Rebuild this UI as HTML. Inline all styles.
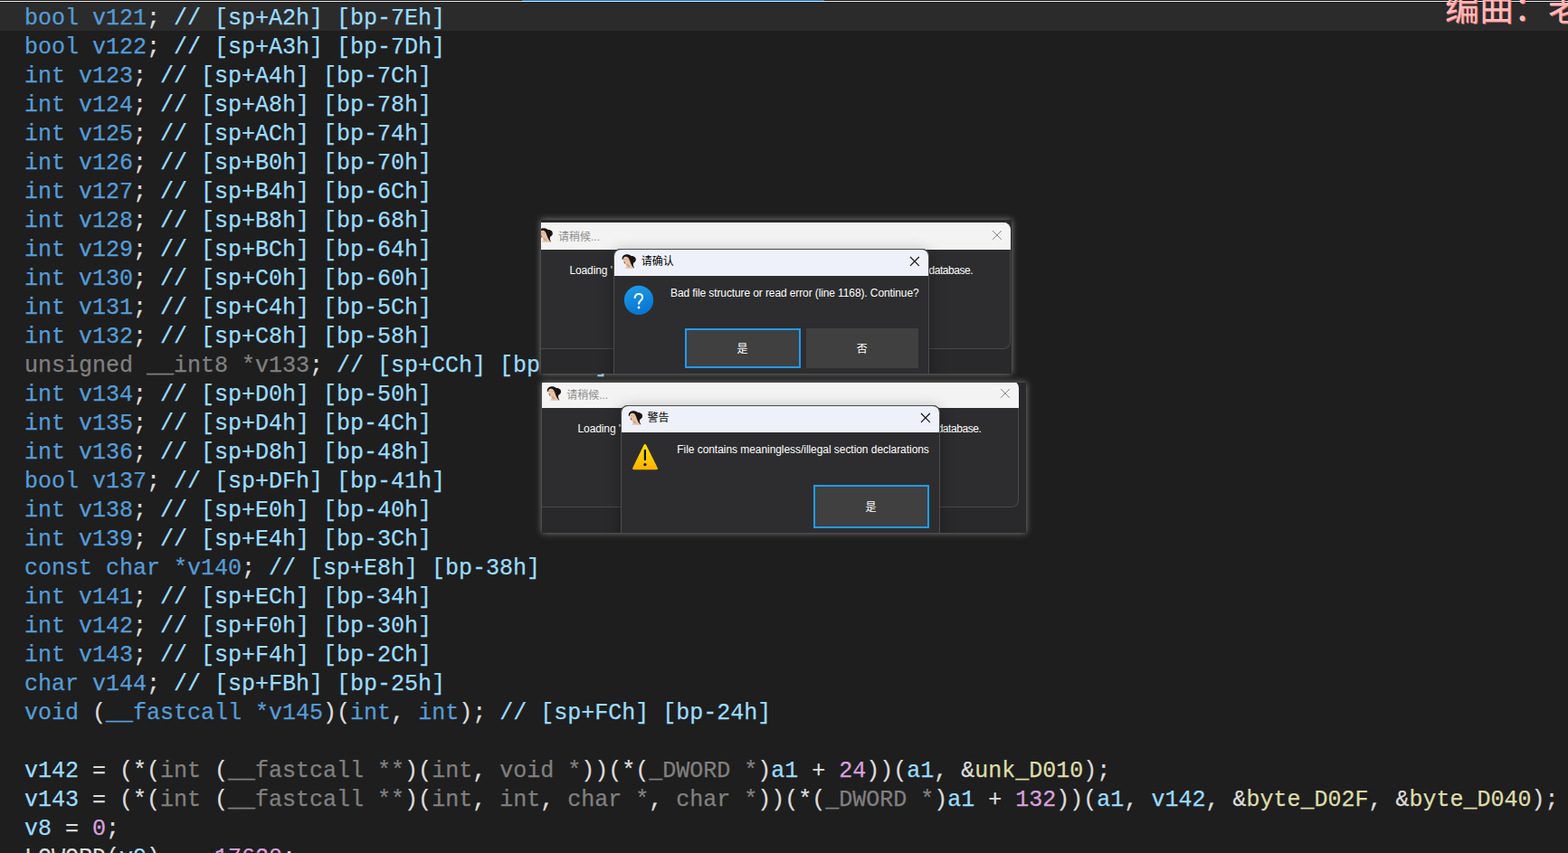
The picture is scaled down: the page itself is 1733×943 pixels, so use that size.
<!DOCTYPE html>
<html><head><meta charset="utf-8">
<style>
html,body{margin:0;padding:0}
html{width:1733px;height:943px;overflow:hidden;background:#1e1e1e}
body{width:1733px;height:943px;overflow:hidden;position:relative;background:#1e1e1e;font-family:"Liberation Sans",sans-serif}
.topline{position:absolute;left:0;top:0;width:1733px;height:1px;background:#161618;border-bottom:1px solid #ececec}
.topblue{position:absolute;left:577px;top:0;width:334px;height:1px;background:#0072c9}
.hl{position:absolute;left:0;top:3px;width:1733px;height:31px;background:#2b2b2b}
.code{position:absolute;left:27px;top:5px;font-family:"Liberation Mono",monospace;font-size:25px;line-height:32px;white-space:pre;color:#dcdcdc;-webkit-text-stroke:0.25px;height:938px;width:1706px;overflow:hidden}
.l{height:32px}
.k{color:#569cd6}.c{color:#9cdcfe}.p{color:#dcdcdc}.g{color:#808080}.n{color:#d8a0df}.y{color:#dcdcaa}.v{color:#9cdcfe}
.ov{position:absolute;overflow:hidden;background:#29292b;box-shadow:0 0 7px #868686}
.ovs{position:absolute;left:0;top:0}
.win{position:absolute;box-sizing:border-box;background:#2d2d2f;box-shadow:inset 0 0 0 1px #48484a;border-radius:8px;overflow:hidden}
.dlg{position:absolute;box-sizing:border-box;background:#2d2d2f;box-shadow:inset 0 0 0 1px #4c4c4e,0 3px 16px rgba(0,0,0,.3);border-radius:8px 8px 0 0;overflow:hidden}
.tb{height:30px}
.tbg{background:#f3f3f3;border-top:1px solid #fff;box-sizing:border-box}
.tbl{background:#eff1fa;margin:1px 1px 0 1px;height:29px;border-radius:7px 7px 0 0}
.t{position:absolute;font-family:"Liberation Sans",sans-serif;font-size:12px;line-height:14px;color:#fff;white-space:pre}
.btn{position:absolute;box-sizing:border-box;background:#404040}
.foc{border:2px solid #1e9cf3}
.lyr{position:absolute;left:0;top:0}
.cj{font-family:"Liberation Sans","Noto Sans CJK SC",sans-serif;font-size:12px}
</style></head><body>
<div class="hl"></div>
<div class="topline"></div><div class="topblue"></div>
<div class="code"><div class="l"><span class="k">bool v121</span><span class="p">;</span><span class="c"> // [sp+A2h] [bp-7Eh]</span></div><div class="l"><span class="k">bool v122</span><span class="p">;</span><span class="c"> // [sp+A3h] [bp-7Dh]</span></div><div class="l"><span class="k">int v123</span><span class="p">;</span><span class="c"> // [sp+A4h] [bp-7Ch]</span></div><div class="l"><span class="k">int v124</span><span class="p">;</span><span class="c"> // [sp+A8h] [bp-78h]</span></div><div class="l"><span class="k">int v125</span><span class="p">;</span><span class="c"> // [sp+ACh] [bp-74h]</span></div><div class="l"><span class="k">int v126</span><span class="p">;</span><span class="c"> // [sp+B0h] [bp-70h]</span></div><div class="l"><span class="k">int v127</span><span class="p">;</span><span class="c"> // [sp+B4h] [bp-6Ch]</span></div><div class="l"><span class="k">int v128</span><span class="p">;</span><span class="c"> // [sp+B8h] [bp-68h]</span></div><div class="l"><span class="k">int v129</span><span class="p">;</span><span class="c"> // [sp+BCh] [bp-64h]</span></div><div class="l"><span class="k">int v130</span><span class="p">;</span><span class="c"> // [sp+C0h] [bp-60h]</span></div><div class="l"><span class="k">int v131</span><span class="p">;</span><span class="c"> // [sp+C4h] [bp-5Ch]</span></div><div class="l"><span class="k">int v132</span><span class="p">;</span><span class="c"> // [sp+C8h] [bp-58h]</span></div><div class="l"><span class="g">unsigned __int8 *v133</span><span class="p">;</span><span class="c"> // [sp+CCh] [bp-54h]</span></div><div class="l"><span class="k">int v134</span><span class="p">;</span><span class="c"> // [sp+D0h] [bp-50h]</span></div><div class="l"><span class="k">int v135</span><span class="p">;</span><span class="c"> // [sp+D4h] [bp-4Ch]</span></div><div class="l"><span class="k">int v136</span><span class="p">;</span><span class="c"> // [sp+D8h] [bp-48h]</span></div><div class="l"><span class="k">bool v137</span><span class="p">;</span><span class="c"> // [sp+DFh] [bp-41h]</span></div><div class="l"><span class="k">int v138</span><span class="p">;</span><span class="c"> // [sp+E0h] [bp-40h]</span></div><div class="l"><span class="k">int v139</span><span class="p">;</span><span class="c"> // [sp+E4h] [bp-3Ch]</span></div><div class="l"><span class="k">const char *v140</span><span class="p">;</span><span class="c"> // [sp+E8h] [bp-38h]</span></div><div class="l"><span class="k">int v141</span><span class="p">;</span><span class="c"> // [sp+ECh] [bp-34h]</span></div><div class="l"><span class="k">int v142</span><span class="p">;</span><span class="c"> // [sp+F0h] [bp-30h]</span></div><div class="l"><span class="k">int v143</span><span class="p">;</span><span class="c"> // [sp+F4h] [bp-2Ch]</span></div><div class="l"><span class="k">char v144</span><span class="p">;</span><span class="c"> // [sp+FBh] [bp-25h]</span></div><div class="l"><span class="k">void </span><span class="p">(</span><span class="k">__fastcall *v145</span><span class="p">)(</span><span class="k">int</span><span class="p">, </span><span class="k">int</span><span class="p">);</span><span class="c"> // [sp+FCh] [bp-24h]</span></div><div class="l"></div><div class="l"><span class="v">v142</span><span class="p"> = (*(</span><span class="g">int </span><span class="p">(</span><span class="g">__fastcall **</span><span class="p">)(</span><span class="g">int</span><span class="p">, </span><span class="g">void *</span><span class="p">))(*(</span><span class="g">_DWORD *</span><span class="p">)</span><span class="v">a1</span><span class="p"> + </span><span class="n">24</span><span class="p">))(</span><span class="v">a1</span><span class="p">, &amp;</span><span class="y">unk_D010</span><span class="p">);</span></div><div class="l"><span class="v">v143</span><span class="p"> = (*(</span><span class="g">int </span><span class="p">(</span><span class="g">__fastcall **</span><span class="p">)(</span><span class="g">int</span><span class="p">, </span><span class="g">int</span><span class="p">, </span><span class="g">char *</span><span class="p">, </span><span class="g">char *</span><span class="p">))(*(</span><span class="g">_DWORD *</span><span class="p">)</span><span class="v">a1</span><span class="p"> + </span><span class="n">132</span><span class="p">))(</span><span class="v">a1</span><span class="p">, </span><span class="v">v142</span><span class="p">, &amp;</span><span class="y">byte_D02F</span><span class="p">, &amp;</span><span class="y">byte_D040</span><span class="p">);</span></div><div class="l"><span class="v">v8</span><span class="p"> = </span><span class="n">0</span><span class="p">;</span></div><div class="l"><span class="p">LOWORD(</span><span class="v">v9</span><span class="p">) = </span><span class="n">-17620</span><span class="p">;</span></div></div>
<div class="ov" style="left:598px;top:243px;width:520px;height:170px"><div class="win" style="left:-38px;top:3px;width:557px;height:140px"><div class="tb tbg"></div></div><div class="t" style="left:31.4px;top:49.4px;letter-spacing:-0.1px">Loading '</div><div class="t" style="left:277.2px;top:49.4px;width:200px;text-align:right;letter-spacing:-0.45px">from the database.</div><div class="dlg" style="left:80px;top:32px;width:349px;height:200px"><div class="tb tbl"></div></div><div class="t" style="left:143.0px;top:73.8px;letter-spacing:-0.11px">Bad file structure or read error (line 1168). Continue?</div><div class="btn foc" style="left:159px;top:120px;width:128px;height:44px"></div><div class="btn" style="left:293px;top:120px;width:124px;height:44px"></div><svg class="ovs" width="520" height="170" viewBox="0 0 520 170"><g transform="translate(-3.00,9.00)">
<path fill="#e4c4a8" d="M2,3C3,1.8 5.5,1.6 7,2.6C8.4,3.6 9.2,5.6 9.6,7.6C10,9.4 11,11 12.2,12.8C13,14 13.8,15 14.2,15.8L3.4,15.8C4,15.2 5,14.6 5.2,13.4C5.3,12.4 4.9,11.8 4.4,11.2C3.4,10.6 2.6,9.6 2.3,8.2C2,6.6 1.7,4.6 2,3Z"/>
<path fill="#c79f82" d="M2.6,5.2h1.7v1H2.6zM5.4,5.4h1.7v1H5.4zM6,10.5C7,11.5 8,12.5 9.4,13.2L8,14.4C6.8,13.6 6,12.6 5.4,11.6Z"/>
<path fill="#a9492e" d="M2.5,8C3.4,8 4,8.8 4.1,9.8C4.2,10.6 3.8,10.9 3.3,10.3C2.8,9.6 2.5,8.8 2.5,8Z"/>
<path fill="#1c1210" d="M0.6,5.8C0.2,3.2 1.4,1.2 4,0.5C6.4,-0.1 9,0.6 10.8,2C12,1.8 13.8,2.2 15,3.6C16.2,5.2 16,7.4 14.8,8.6C14.2,9.2 13.6,9.4 13.2,9.4C12.8,10.6 12.6,11.8 13.2,13.4C13.5,14.2 13.9,15 14.2,15.6L12.9,14.8C11.6,13 10.4,11.2 9.8,9.4C9.2,7.6 8.8,5.6 7.6,4.2C6.4,2.8 4.2,2.4 3,3.2C2.2,3.8 1.6,4.8 1.5,6.2Z"/>
</g><text class="cj" x="19" y="22.5" fill="#8c8c8c">请稍候...</text><path stroke="#858585" stroke-width="1.0" fill="none" d="M499.00,12.00L508.80,21.80M508.80,12.00L499.00,21.80"/><g transform="translate(89.00,38.00)">
<path fill="#e4c4a8" d="M2,3C3,1.8 5.5,1.6 7,2.6C8.4,3.6 9.2,5.6 9.6,7.6C10,9.4 11,11 12.2,12.8C13,14 13.8,15 14.2,15.8L3.4,15.8C4,15.2 5,14.6 5.2,13.4C5.3,12.4 4.9,11.8 4.4,11.2C3.4,10.6 2.6,9.6 2.3,8.2C2,6.6 1.7,4.6 2,3Z"/>
<path fill="#c79f82" d="M2.6,5.2h1.7v1H2.6zM5.4,5.4h1.7v1H5.4zM6,10.5C7,11.5 8,12.5 9.4,13.2L8,14.4C6.8,13.6 6,12.6 5.4,11.6Z"/>
<path fill="#a9492e" d="M2.5,8C3.4,8 4,8.8 4.1,9.8C4.2,10.6 3.8,10.9 3.3,10.3C2.8,9.6 2.5,8.8 2.5,8Z"/>
<path fill="#1c1210" d="M0.6,5.8C0.2,3.2 1.4,1.2 4,0.5C6.4,-0.1 9,0.6 10.8,2C12,1.8 13.8,2.2 15,3.6C16.2,5.2 16,7.4 14.8,8.6C14.2,9.2 13.6,9.4 13.2,9.4C12.8,10.6 12.6,11.8 13.2,13.4C13.5,14.2 13.9,15 14.2,15.6L12.9,14.8C11.6,13 10.4,11.2 9.8,9.4C9.2,7.6 8.8,5.6 7.6,4.2C6.4,2.8 4.2,2.4 3,3.2C2.2,3.8 1.6,4.8 1.5,6.2Z"/>
</g><text class="cj" x="110.8" y="50.3" fill="#000">请确认</text><path stroke="#111" stroke-width="1.2" fill="none" d="M408.00,41.00L417.80,50.80M417.80,41.00L408.00,50.80"/><defs><linearGradient id="qg" x1="0" y1="0" x2="0.3" y2="1"><stop offset="0" stop-color="#1f9ee9"/><stop offset="1" stop-color="#0876d3"/></linearGradient><linearGradient id="wg" x1="0" y1="0" x2="0" y2="1"><stop offset="0" stop-color="#ffe000"/><stop offset="1" stop-color="#ffb400"/></linearGradient></defs><circle cx="108.00" cy="88.90" r="16.1" fill="url(#qg)"/><g transform="translate(108.00,88.90)"><path fill="none" stroke="#fff" stroke-width="2.1" d="M-4.3,-2.2C-4.3,-5.4 -2.4,-6.9 0,-6.9C2.5,-6.9 4.1,-5.3 4.1,-3.2C4.1,-1.2 2.8,-0.2 1.6,0.9C0.4,2 0,2.8 0,4.5"/><circle cx="0" cy="8.1" r="1.4" fill="#fff"/></g><text class="cj" x="222.6" y="147.4" fill="#fff" text-anchor="middle">是</text><text class="cj" x="354.8" y="147.4" fill="#fff" text-anchor="middle">否</text></svg></div><div class="ov" style="left:599px;top:423px;width:535px;height:166px"><div class="win" style="left:-19px;top:-2px;width:546px;height:140px"><div class="tb tbg"></div></div><div class="t" style="left:39.5px;top:43.8px;letter-spacing:-0.1px">Loading '</div><div class="t" style="left:285.3px;top:43.8px;width:200px;text-align:right;letter-spacing:-0.45px">from the database.</div><div class="dlg" style="left:87px;top:25px;width:353px;height:200px"><div class="tb tbl"></div></div><div class="t" style="left:149.3px;top:66.9px;letter-spacing:-0.055px">File contains meaningless/illegal section declarations</div><div class="btn foc" style="left:300px;top:113px;width:128px;height:48px"></div><svg class="ovs" width="535" height="166" viewBox="0 0 535 166"><g transform="translate(5.20,4.00)">
<path fill="#e4c4a8" d="M2,3C3,1.8 5.5,1.6 7,2.6C8.4,3.6 9.2,5.6 9.6,7.6C10,9.4 11,11 12.2,12.8C13,14 13.8,15 14.2,15.8L3.4,15.8C4,15.2 5,14.6 5.2,13.4C5.3,12.4 4.9,11.8 4.4,11.2C3.4,10.6 2.6,9.6 2.3,8.2C2,6.6 1.7,4.6 2,3Z"/>
<path fill="#c79f82" d="M2.6,5.2h1.7v1H2.6zM5.4,5.4h1.7v1H5.4zM6,10.5C7,11.5 8,12.5 9.4,13.2L8,14.4C6.8,13.6 6,12.6 5.4,11.6Z"/>
<path fill="#a9492e" d="M2.5,8C3.4,8 4,8.8 4.1,9.8C4.2,10.6 3.8,10.9 3.3,10.3C2.8,9.6 2.5,8.8 2.5,8Z"/>
<path fill="#1c1210" d="M0.6,5.8C0.2,3.2 1.4,1.2 4,0.5C6.4,-0.1 9,0.6 10.8,2C12,1.8 13.8,2.2 15,3.6C16.2,5.2 16,7.4 14.8,8.6C14.2,9.2 13.6,9.4 13.2,9.4C12.8,10.6 12.6,11.8 13.2,13.4C13.5,14.2 13.9,15 14.2,15.6L12.9,14.8C11.6,13 10.4,11.2 9.8,9.4C9.2,7.6 8.8,5.6 7.6,4.2C6.4,2.8 4.2,2.4 3,3.2C2.2,3.8 1.6,4.8 1.5,6.2Z"/>
</g><text class="cj" x="27.2" y="18" fill="#8c8c8c">请稍候...</text><path stroke="#858585" stroke-width="1.0" fill="none" d="M507.10,7.00L516.90,16.80M516.90,7.00L507.10,16.80"/><g transform="translate(95.20,31.00)">
<path fill="#e4c4a8" d="M2,3C3,1.8 5.5,1.6 7,2.6C8.4,3.6 9.2,5.6 9.6,7.6C10,9.4 11,11 12.2,12.8C13,14 13.8,15 14.2,15.8L3.4,15.8C4,15.2 5,14.6 5.2,13.4C5.3,12.4 4.9,11.8 4.4,11.2C3.4,10.6 2.6,9.6 2.3,8.2C2,6.6 1.7,4.6 2,3Z"/>
<path fill="#c79f82" d="M2.6,5.2h1.7v1H2.6zM5.4,5.4h1.7v1H5.4zM6,10.5C7,11.5 8,12.5 9.4,13.2L8,14.4C6.8,13.6 6,12.6 5.4,11.6Z"/>
<path fill="#a9492e" d="M2.5,8C3.4,8 4,8.8 4.1,9.8C4.2,10.6 3.8,10.9 3.3,10.3C2.8,9.6 2.5,8.8 2.5,8Z"/>
<path fill="#1c1210" d="M0.6,5.8C0.2,3.2 1.4,1.2 4,0.5C6.4,-0.1 9,0.6 10.8,2C12,1.8 13.8,2.2 15,3.6C16.2,5.2 16,7.4 14.8,8.6C14.2,9.2 13.6,9.4 13.2,9.4C12.8,10.6 12.6,11.8 13.2,13.4C13.5,14.2 13.9,15 14.2,15.6L12.9,14.8C11.6,13 10.4,11.2 9.8,9.4C9.2,7.6 8.8,5.6 7.6,4.2C6.4,2.8 4.2,2.4 3,3.2C2.2,3.8 1.6,4.8 1.5,6.2Z"/>
</g><text class="cj" x="116.6" y="43.3" fill="#000">警告</text><path stroke="#111" stroke-width="1.2" fill="none" d="M419.00,34.00L428.80,43.80M428.80,34.00L419.00,43.80"/><path fill="url(#wg)" stroke="url(#wg)" stroke-width="3" stroke-linejoin="round" d="M113.90,69.60L126.40,94.80L101.60,94.80Z"/><path fill="#0a0a14" d="M112.80,74.10h2.2v11.8h-2.2z"/><circle cx="113.90" cy="90.60" r="1.6" fill="#0a0a14"/><text class="cj" x="363.4" y="142.4" fill="#fff" text-anchor="middle">是</text></svg></div>
<svg class="lyr" width="1733" height="40" viewBox="0 0 1733 40"><text x="1597.7" y="22.7" font-size="38" fill="#d96464" style="font-family:'Liberation Sans','Noto Sans CJK SC',sans-serif">编曲：老</text><text x="1597" y="22" font-size="38" fill="#ffbaba" style="font-family:'Liberation Sans','Noto Sans CJK SC',sans-serif">编曲：老</text></svg>
</body></html>
